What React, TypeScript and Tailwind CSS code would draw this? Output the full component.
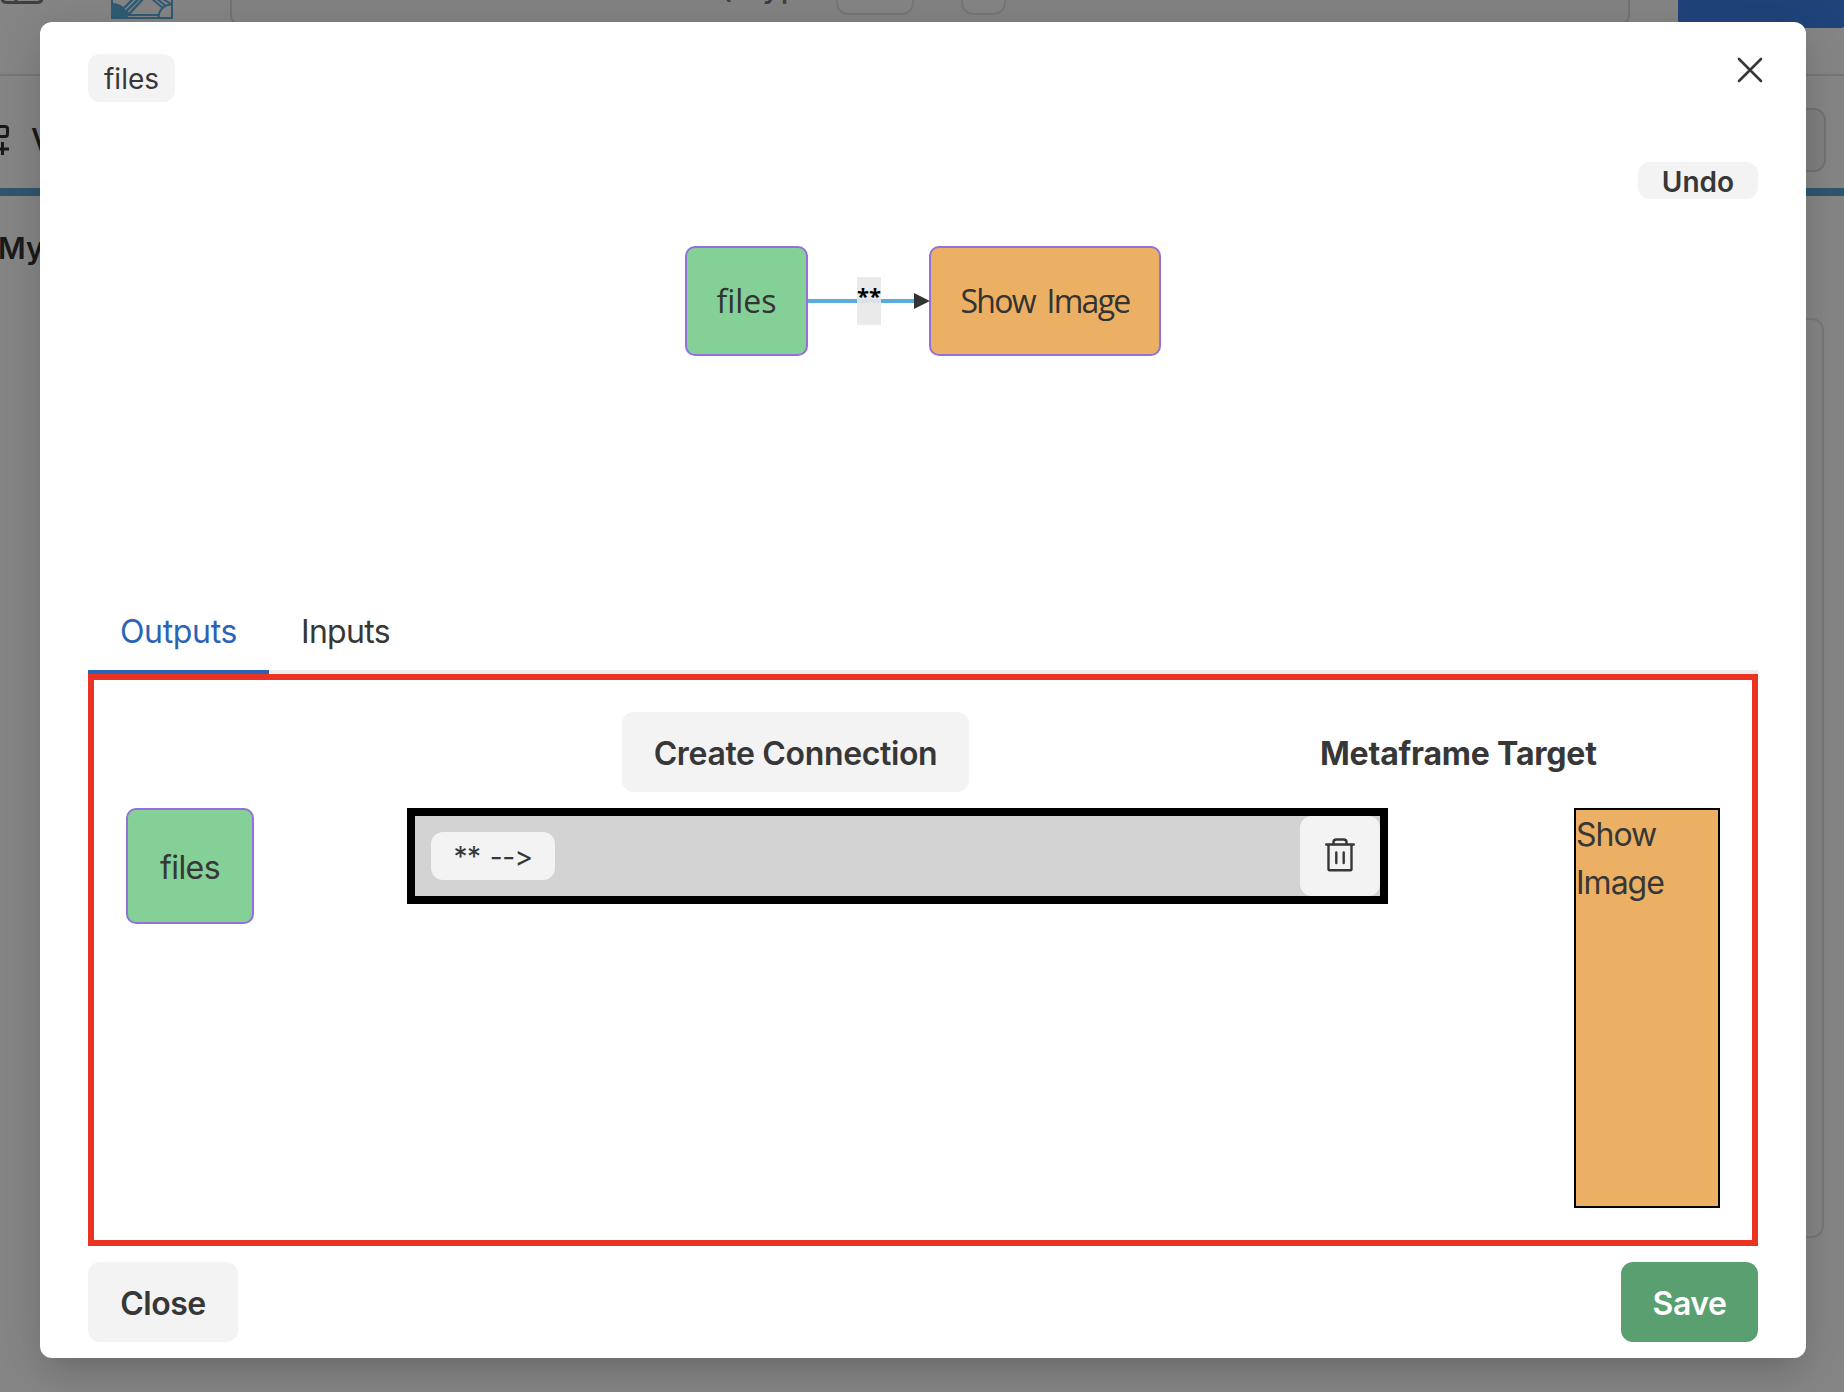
import React from "react";

const ui = "font-['Inter',sans-serif] text-[#373737] [font-variant-ligatures:none] [font-feature-settings:'calt'_0]";

function Page() {
  return (
    <div className="absolute inset-0 flex flex-col bg-white">
      <div className="relative h-[76px] shrink-0 border-b-2 border-[#e2e2e2]">
        <svg className="absolute left-0 top-0" width="180" height="24" viewBox="0 0 180 24" fill="none">
          <path d="M2 -2 Q2 2.500 7 2.500 H37 Q42 2.500 42 -2 M16 -2 V2" stroke="#7a7a7a" strokeWidth="3" />
          <g stroke="#5aaede" strokeWidth="2">
            <path d="M112 -2 V18 H172 V-2" />
            <path d="M112 4 C118 4 122 6 124 10 L129 14 L125 18 H112 Z" fill="#5aaede" />
            <path d="M122 10 L133 -1 M125.500 12 L138.500 -1 M129 14 L143 -1" strokeWidth="2.4" />
            <path d="M158.500 18 C158.500 10 164 4.500 172 4.500 M152 -1 L163 8 M157 -1 L166 6 M163 -1 L171 4 M128 15 H158" />
          </g>
        </svg>
        <div className="absolute -top-10 left-[230px] h-16 w-[1400px] rounded-lg border-2 border-[#dcdcdc] bg-[#fbfbfb]" />
        <div className="absolute -top-[30px] left-[721px] flex gap-3 text-[30px] font-medium leading-[34px] text-[#777]">
          <span>(</span>
          <span className="tracking-[0.8px]">Type</span>
        </div>
        <div className="absolute -top-10 left-[836px] h-[55px] w-[78px] rounded-xl border-2 border-[#e4e4e4] bg-white" />
        <div className="absolute -top-10 left-[961px] h-[55px] w-[45px] rounded-xl border-2 border-[#e4e4e4] bg-white" />
        <div className="absolute -top-10 left-[1678px] h-[68px] w-[170px] rounded-lg bg-[#3d83e8]" />
      </div>
      <div className="relative h-[120px] shrink-0 border-b-8 border-[#57a7d4]">
        <svg className="absolute left-0 top-[48px]" width="12" height="34" viewBox="0 0 12 34" fill="none" stroke="#333" strokeWidth="3">
          <path d="M0 2.500 H5 Q7.500 2.500 7.500 5 V10 Q7.500 12.500 5 12.500 H0 M2.500 18 V31 M0 25 H9" />
        </svg>
        <span className="absolute left-[31px] top-[45px] text-[32px] font-medium leading-[40px] text-[#333]">View</span>
        <div className="absolute left-[1600px] top-[32px] h-16 w-[226px] rounded-xl border-2 border-[#dcdcdc] bg-[#f3f3f3]" />
      </div>
      <span className="-ml-[2px] mt-[28px] text-[30px] font-semibold leading-[48px] text-[#333]">My</span>
      <div className="ml-auto mr-5 mt-[46px] h-[920px] w-[400px] shrink-0 rounded-xl border-2 border-[#e4e4e4]" />
    </div>
  );
}

function Diagram() {
  return (
    <div className="ml-[597px] mt-[47px] flex h-[110px] items-center font-['Open_Sans',sans-serif] text-[32px] text-[#333]">
      <div className="flex h-[110px] w-[123px] items-center justify-center rounded-[10px] border-2 border-[#9370db] bg-[#84d097] pb-px">files</div>
      <div className="relative flex h-12 w-[121px] items-center">
        <div className="h-1 w-[107px] bg-[#5aabdf]" />
        <svg className="-mr-px" width="16" height="16" viewBox="0 0 16 16"><path d="M0 0 L16 8 L0 16 Z" fill="#333" /></svg>
        <div className="absolute left-[49px] top-0 h-12 w-6 bg-[#e8e8e8]/90 text-center text-[22px] font-bold leading-[37px] text-black">**</div>
      </div>
      <div className="flex h-[110px] w-[232px] items-center justify-center rounded-[10px] border-2 border-[#9370db] bg-[#ebb064] pb-px tracking-[-1.7px] [word-spacing:5px]">Show Image</div>
    </div>
  );
}

function Trash() {
  return (
    <svg className="-mt-[3px]" width="30" height="34" viewBox="0 0 30 34" fill="none" stroke="#373737" strokeWidth="2.4" strokeLinecap="round" strokeLinejoin="round">
      <path d="M1.200 6.500 H28.800 M3.500 6.500 V31 Q3.500 32.300 4.800 32.300 H25.200 Q26.500 32.300 26.500 31 V6.500 M8.500 6.500 V4.300 Q8.500 1.500 11.300 1.500 H18.700 Q21.500 1.500 21.500 4.300 V6.500 M11.300 14.500 V25 M18.700 14.500 V25" />
    </svg>
  );
}

export default function App() {
  return (
    <div className={`relative h-[1392px] w-[1844px] overflow-hidden ${ui}`}>
      <Page />
      <div className="absolute inset-0 bg-black/[0.48]" />
      <main className="absolute left-[40px] top-[22px] flex h-[1336px] w-[1766px] flex-col rounded-xl bg-white px-12 shadow-[0_20px_30px_-10px_rgba(0,0,0,0.12),0_8px_50px_0px_rgba(0,0,0,0.12)]">
        <header className="flex h-[140px] shrink-0 items-start justify-between pt-8">
          <span className="flex h-12 w-[87px] items-center justify-center rounded-xl bg-[#f3f3f3] pt-px text-[28px]">files</span>
          <svg className="-mr-2" width="32" height="32" viewBox="0 0 32 32" stroke="#373737" strokeWidth="2.6" strokeLinecap="round"><path d="M5 5 L27 27 M27 5 L5 27" /></svg>
        </header>
        <button className="flex h-[37px] w-[120px] shrink-0 items-center justify-center self-end rounded-xl bg-[#f3f3f3] pt-0.5 text-[28px] font-semibold">Undo</button>
        <Diagram />
        <nav className="mt-[234px] flex h-[84px] shrink-0 border-b-4 border-[#ededed] text-[32px]">
          <span className="flex h-[84px] w-[181px] items-center justify-center border-b-4 border-[#2b64b4] pt-[3px] tracking-[-0.35px] text-[#2b64b4]">Outputs</span>
          <span className="flex h-20 items-center px-8 pt-[3px] tracking-[-0.7px]">Inputs</span>
        </nav>
        <section className="flex h-[572px] shrink-0 flex-col border-[6px] border-[#eb3323] px-8 pt-8">
          <div className="flex h-20 items-center text-[32px] font-semibold">
            <button className="ml-[496px] h-20 w-[347px] rounded-xl bg-[#f3f3f3] pt-[3px] tracking-[-0.35px]">Create Connection</button>
            <h2 className="ml-[351px] pt-[3px] font-bold tracking-[-0.2px]">Metaframe Target</h2>
          </div>
          <div className="mt-4 flex items-start text-[32px]">
            <div className="flex h-[116px] w-[128px] items-center justify-center rounded-[10px] border-2 border-[#9370db] bg-[#84d097] pt-[3px] tracking-[-0.6px]">files</div>
            <div className="ml-[153px] flex h-24 w-[981px] items-center justify-between border-8 border-black bg-[#d3d3d3] pl-4">
              <span className="flex h-12 w-[124px] items-center justify-center rounded-xl bg-[#f3f3f3] pt-px text-[28px] tracking-[-0.5px] [word-spacing:2px]">** --&gt;</span>
              <button className="flex size-20 items-center justify-center rounded-xl bg-[#f3f3f3]"><Trash /></button>
            </div>
            <div className="ml-auto h-[400px] w-[146px] border-2 border-black bg-[#ebb064] pt-px leading-[48px] tracking-[-1px]">Show Image</div>
          </div>
        </section>
        <footer className="mt-4 flex justify-between text-[32px] font-semibold tracking-[-0.5px]">
          <button className="h-20 w-[150px] rounded-xl bg-[#f3f3f3] pt-[3px]">Close</button>
          <button className="h-20 w-[137px] rounded-xl bg-[#5a9f70] pt-[3px] text-white">Save</button>
        </footer>
      </main>
    </div>
  );
}
